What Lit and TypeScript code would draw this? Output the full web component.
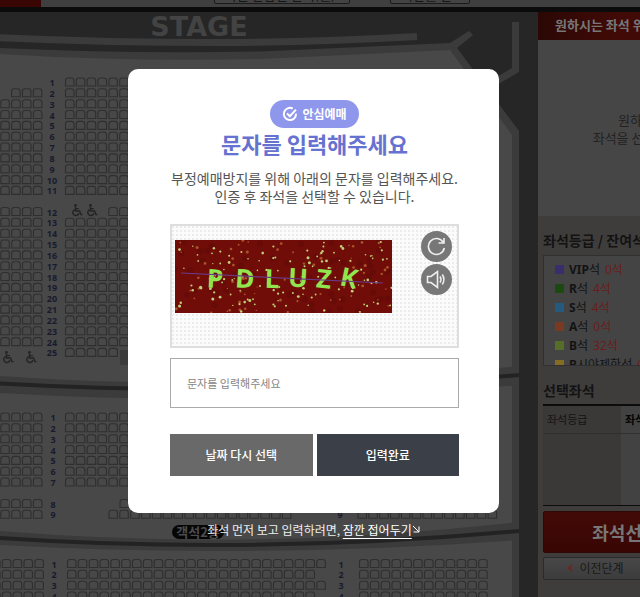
import { LitElement, html, svg, css } from "lit";
import { customElement } from "lit/decorators.js";

interface SeatRow {
  y: number;
  label: string;
  labels: number[];
  runs: [number, number][];
}

const PITCH = 10.84;
const LABEL_X = 52;
const LEFT = -10;

/** Rows of the seating plan: every run is [first seat x, number of seats]. */
function buildRows(): SeatRow[] {
  const rows: SeatRow[] = [];
  for (let i = 0; i < 11; i++) {
    const left: [number, number][] = i === 0 ? [] : i === 1 ? [[11.6, 3]] : [[LEFT, 5]];
    rows.push({ y: 66 + i * PITCH, label: `${i + 1}`, labels: [LABEL_X], runs: [...left, [65.5, 40]] });
  }
  for (let i = 0; i < 14; i++) {
    const right: [number, number] = i === 0 ? [108.8, 36] : i === 13 ? [65.5, 5] : [65.5, 40];
    const left: [number, number][] = i === 13 ? [] : [[LEFT, 5]];
    rows.push({ y: 195.5 + i * PITCH, label: `${i + 12}`, labels: [LABEL_X], runs: [...left, right] });
  }
  for (let i = 0; i < 7; i++) {
    rows.push({ y: 401 + i * PITCH, label: `${i + 1}`, labels: [53], runs: [[LEFT, 5], [65.5, 39]] });
  }
  rows.push({ y: 487.5, label: "8", labels: [53, 340], runs: [[LEFT, 5], [120, 15], [358, 13]] });
  rows.push({ y: 498.3, label: "9", labels: [53, 340], runs: [[LEFT, 5], [109, 17], [358, 13]] });
  for (let i = 0; i < 4; i++) {
    rows.push({
      y: 547.5 + i * PITCH,
      label: `${i + 1}`,
      labels: [54, 341],
      runs: [[-8.5, 5], [67.5, i % 2 === 0 ? 24 : 23], [359.5, 12]],
    });
  }
  return rows;
}

@customElement("seat-map")
export class SeatMap extends LitElement {
  static styles = css`
    :host { display: block; overflow: hidden; background: #262626; }
    svg { display: block; width: 100%; height: 100%; }
    .floor { fill: #484848; }
    .band { fill: #3b3b3b; }
    .rim { fill: none; stroke: #3b3b3b; stroke-width: 7; }
    .line { fill: none; stroke: #232323; stroke-width: 4; }
    .seat { fill: none; stroke: #2f2f2f; stroke-width: 1.1; }
    .num { font: 700 9px "Noto Sans", sans-serif; fill: #181b2e; text-anchor: middle; }
    .stage { font: 700 27px "DejaVu Sans", sans-serif; fill: #434343; text-anchor: middle; }
    .chair { fill: none; stroke: #232323; stroke-width: 1.4; }
    .head { fill: #232323; }
    .tag { fill: #060606; }
    .tag-text { font: 700 13px "Noto Sans CJK KR", sans-serif; fill: #4c4c4c; text-anchor: middle; }
  `;

  private seats(rows: SeatRow[]) {
    let d = "";
    for (const row of rows) {
      for (const [start, count] of row.runs) {
        for (let i = 0; i < count; i++) {
          const x = (start + i * PITCH).toFixed(1);
          d += `M${x} ${(row.y + 8).toFixed(1)}v-5.5q0 -2.5 2.5 -2.5h3.5q2.5 0 2.5 2.5v5.5z`;
        }
      }
    }
    return svg`<path class="seat" d=${d} />`;
  }

  private wheelchair(x: number, y: number) {
    return svg`<g transform="translate(${x} ${y})">
      <circle class="head" cx="3.5" cy="1.3" r="1.3" />
      <path class="chair" d="M3.5 2.5V7H7.5L9 10.6H10.5M3.5 4.6H6.8M2.6 5.6A3.1 3.1 0 1 0 6.9 9.2" />
    </g>`;
  }

  render() {
    const rows = buildRows();
    return html`<svg viewBox="0 0 538 585" preserveAspectRatio="xMinYMin slice" role="img" aria-label="STAGE">
      <text class="stage" x="199" y="24">STAGE</text>
      <path class="rim" d="M-4 25.5Q120 31 240 30.5Q330 29.5 417 24.5" />
      <path class="rim" d="M515.5 10V58L485 76" />
      <path class="band" d="M0 36Q130 42 260 39.5L450 31L469 19L473 23L457 36L519 119V585H0Z" />
      <path class="floor" d="M0 42Q130 50 260 47L450 38L512 123V585H0Z" />
      <path class="band" d="M0 364Q256 382 519 354V373Q256 396 0 381Z" />
      <path class="line" d="M0 371.5Q256 386 519 363" />
      <path class="band" d="M0 519Q256 540 519 510V528Q256 547 0 533Z" />
      <path class="line" d="M0 526Q256 543 519 519" />
      <rect class="band" x="120" y="338" width="20" height="15" />
      ${this.seats(rows)}
      ${rows.map((r) => r.labels.map((x) => svg`<text class="num" x=${x} y=${r.y + 8}>${r.label}</text>`))}
      ${this.wheelchair(72, 192)} ${this.wheelchair(87, 192)}
      ${this.wheelchair(3, 339)} ${this.wheelchair(26, 339)}
      <rect class="tag" x="172" y="513" width="52" height="14" rx="7" />
      <text class="tag-text" x="198" y="525">객석2층</text>
    </svg>`;
  }
}

const CODE: [string, number, number, number][] = [
  ["P", 40, 48, 3],
  ["D", 70, 48, 4],
  ["L", 97, 48, 2],
  ["U", 123, 47, 3],
  ["Z", 149, 48, 6],
  ["K", 174, 47, 12],
];

@customElement("code-picture")
export class CodePicture extends LitElement {
  static styles = css`
    :host { display: block; }
    svg { display: block; }
    .back { fill: #700d09; }
    .patch { fill: #660b08; }
    .dot { fill: #c3cf78; }
    .dim { fill: #a8552c; }
    .letter { font: 700 26px "Noto Sans", sans-serif; fill: #91e650; text-anchor: middle; }
    .strike { fill: none; stroke: #6b3b86; stroke-width: 1.2; }
  `;

  private specks() {
    let seed = 41;
    const next = () => (seed = (seed * 16807) % 2147483647) / 2147483647;
    return Array.from({ length: 250 }, (_, i) => {
      const kind = i < 60 ? "patch" : i < 130 ? "dim" : "dot";
      const r = kind === "patch" ? 3 : 0.7 + next() * 0.8;
      return svg`<circle class=${kind} cx=${(next() * 217).toFixed(1)} cy=${(next() * 73).toFixed(1)} r=${r.toFixed(1)} />`;
    });
  }

  render() {
    return html`<svg width="217" height="73" viewBox="0 0 217 73" role="img" aria-label="보안문자">
      <rect class="back" width="217" height="73" />
      ${this.specks()}
      ${CODE.map(([c, x, y, turn]) => svg`<text class="letter" x=${x} y=${y} transform="rotate(${turn} ${x} ${y - 9})">${c}</text>`)}
      <path class="strike" d="M6 33L208 43" />
    </svg>`;
  }
}

const GRADES = [
  { name: "VIP", left: "0석", tone: "violet" },
  { name: "R", left: "4석", tone: "green" },
  { name: "S", left: "4석", tone: "blue" },
  { name: "A", left: "0석", tone: "orange" },
  { name: "B", left: "32석", tone: "lime" },
  { name: "B", extra: "시야제한", left: "0석", tone: "yellow" },
];

@customElement("seat-panel")
export class SeatPanel extends LitElement {
  static styles = css`
    * { box-sizing: border-box; }
    :host {
      display: flex; flex-direction: column; background: #3f3d3c; color: #131313;
      font: 12px/18px "Noto Sans", "Noto Sans CJK KR", sans-serif;
    }
    h2, h3 { margin: 0; }
    h2 {
      background: linear-gradient(90deg, #2b0805, #420a06 40%); color: #777; padding-left: 17px;
      font: 700 13px/26px "Noto Sans CJK KR", sans-serif; height: 28px; white-space: nowrap;
    }
    .hint {
      margin: 0; height: 176px; display: grid; place-content: center; text-align: center;
      background: #464646; color: #222; font: 13px/18px "Noto Sans CJK KR", sans-serif; padding-top: 2px;
    }
    .body { padding: 15px 5px 0; }
    h3 { font: 700 14px/18px "Noto Sans CJK KR", sans-serif; }
    ul {
      list-style: none; margin: 6px 0 0; padding: 4px 11px 0; height: 111px; overflow: hidden;
      border: 1px solid #303030; background: #444;
    }
    li { display: flex; align-items: center; height: 19px; gap: 5px; white-space: nowrap; }
    .chip { width: 9px; height: 9px; }
    .violet { background: #392d6c; }
    .green { background: #1a4a0f; }
    .blue { background: #245a80; }
    .orange { background: #783b22; }
    .lime { background: #566e29; }
    .yellow { background: #846d20; }
    .grade { font-weight: 400; }
    .left { color: #6b1d1d; }
    .picked { margin-top: 15px; }
    table { width: 100%; border-collapse: collapse; margin-top: 5px; border-top: 2px solid #0c0c0c; border-bottom: 1px solid #0c0c0c; }
    th { height: 28px; border-bottom: 1px solid #303030; font: 11px/16px "Noto Sans CJK KR", sans-serif; text-align: left; padding: 0 4px; }
    th + th { font-weight: 700; color: #050505; }
    td { height: 72px; }
    th:first-child, td:first-child { width: 78px; background: #3b3938; }
    th:last-child, td:last-child { background: #424242; }
    button { font: 12px/18px "Noto Sans CJK KR", sans-serif; color: #191919; border-radius: 2px; padding: 0; }
    .go { width: 100%; height: 42px; margin-top: 5px; border: 1px solid #2e0806; background: linear-gradient(#420a07, #390604); color: #777; font-weight: 700; font-size: 18px; line-height: 24px; }
    .steps { display: grid; grid-template-columns: 106px 1fr; gap: 2px; margin-top: 4px; }
    .steps button { height: 23px; border: 1px solid #2a2a2a; background: linear-gradient(#484848, #3c3c3c); display: flex; align-items: center; justify-content: center; gap: 6px; }
    .arrow { width: 5px; height: 8px; fill: none; stroke: #7a1c17; stroke-width: 1.6; }
  `;

  render() {
    return html`
      <h2>원하시는 좌석 위치를 선택해주세요</h2>
      <p class="hint"><span>원하시는</span><span>좌석을 선택하세요</span></p>
      <div class="body">
        <h3>좌석등급 / 잔여석</h3>
        <ul>
          ${GRADES.map(
            (g) => html`<li>
              <span class="chip ${g.tone}"></span>
              <span class="grade"><b>${g.name}</b>${g.extra ?? ""}석</span>
              <span class="left">${g.left}</span>
            </li>`
          )}
        </ul>
        <h3 class="picked">선택좌석</h3>
        <table>
          <thead><tr><th>좌석등급</th><th>좌석번호</th></tr></thead>
          <tbody><tr><td></td><td></td></tr></tbody>
        </table>
        <button class="go" type="button">좌석선택완료</button>
        <div class="steps">
          <button type="button"><svg class="arrow" viewBox="0 0 5 8"><path d="M4 1L1 4L4 7" /></svg>이전단계</button>
          <button type="button">다시선택</button>
        </div>
      </div>
    `;
  }
}

@customElement("app-root")
export class AppRoot extends LitElement {
  static styles = css`
    * { box-sizing: border-box; }
    :host {
      display: block; position: relative; height: 100vh; min-height: 560px; overflow: hidden;
      background: #3f3d3c; font-family: "Noto Sans CJK KR", sans-serif;
    }
    .page { display: grid; grid-template-columns: 1fr 208px; grid-template-rows: 12px 1fr; min-width: 746px; height: 100%; }
    header {
      grid-column: 1 / -1; display: flex; align-items: flex-end; gap: 40px; overflow: hidden;
      background: #3f3f3f; border-bottom: 5px solid #0b0b0b;
    }
    .brand { width: 41px; height: 7px; background: #3a0603; margin-right: 133px; }
    header select {
      appearance: none; height: 19px; margin-bottom: 3px; padding: 0 10px; flex: none;
      border: 1px solid #1a1a1a; border-radius: 2px; background: #434343; color: #151515;
      font: 13px/17px "Noto Sans CJK KR", sans-serif;
    }
    .play { width: 136px; }
    .date { width: 80px; }
    .overlay {
      position: absolute; inset: 0; padding: 69px 13px 0 0;
      display: flex; flex-direction: column; align-items: center;
    }
    .dialog {
      width: 371px; max-width: 100%; padding: 31px 40px 37px 42px; border-radius: 10px; background: #fff;
      display: flex; flex-direction: column;
    }
    .badge {
      align-self: center; display: flex; align-items: center; gap: 4px; height: 28px; padding: 0 12px;
      border-radius: 14px; background: #8f97ec; color: #fff; font-weight: 700; font-size: 12px; line-height: 18px;
    }
    .badge svg { width: 16px; height: 16px; fill: none; stroke: #fff; stroke-width: 2; }
    h1 { margin: 0; text-align: center; font-size: 22px; line-height: 30px; font-weight: 700; color: #6672cf; }
    .lead { margin: 11px 0 0; text-align: center; font-size: 14px; line-height: 18px; color: #555; white-space: nowrap; }
    .challenge {
      margin-top: 19px; height: 124px; padding: 5px 5px 0 4px; display: flex; justify-content: space-between;
      border: 2px solid #dedede;
      background: radial-gradient(circle at 1px 1px, #ececec 1px, transparent 1px) 0 0 / 4px 4px, #fbfbfb;
    }
    code-picture { margin-top: 9px; margin-left: -1px; }
    .tools { display: flex; flex-direction: column; gap: 2px; }
    .tools button { width: 31px; height: 31px; padding: 0; border: 0; border-radius: 50%; background: #777; display: grid; place-items: center; }
    .tools svg { width: 23px; height: 23px; fill: none; stroke: #eee; stroke-width: 1.6; }
    input {
      margin-top: 10px; width: 100%; height: 50px; padding: 0 16px; border: 1px solid #aaa; border-radius: 0;
      background: #fff; font: 11px/18px "Noto Sans CJK KR", sans-serif; color: #333;
    }
    input::placeholder { color: #858585; opacity: 1; }
    .actions { display: grid; grid-template-columns: 1fr 1fr; gap: 4px; margin-top: 26px; }
    .actions button { height: 42px; border: 0; color: #fff; font: 500 12px/18px "Noto Sans CJK KR", sans-serif; }
    .again { background: #696969; }
    .done { background: #3a3f48; }
    .fold { margin: 8px 0 0; font-size: 12px; line-height: 18px; color: #eee; white-space: nowrap; }
    .fold a { color: #fff; text-underline-offset: 3px; }
    .fold svg { width: 8px; height: 8px; fill: none; stroke: #fff; stroke-width: 1; vertical-align: 2px; }
  `;

  render() {
    return html`
      <div class="page">
        <header>
          <span class="brand"></span>
          <select class="play" aria-label="다른 관람일 선택"><option>다른 관람일 선택(월)</option></select>
          <select class="date" aria-label="시간 선택"><option>시간을 선택</option></select>
        </header>
        <seat-map></seat-map>
        <seat-panel></seat-panel>
      </div>
      <div class="overlay">
        <form class="dialog" role="dialog" aria-labelledby="title" @submit=${(e: Event) => e.preventDefault()}>
          <span class="badge">
            <svg viewBox="0 0 16 16"><path d="M10.8 2.6A6.1 6.1 0 1 0 14 7.6M5 7.4L7.8 10.2L14 3.6" /></svg>안심예매
          </span>
          <h1 id="title">문자를 입력해주세요</h1>
          <p class="lead">부정예매방지를 위해 아래의 문자를 입력해주세요.<br />인증 후 좌석을 선택할 수 있습니다.</p>
          <div class="challenge">
            <code-picture></code-picture>
            <div class="tools">
              <button type="button" aria-label="새로고침">
                <svg viewBox="0 0 23 23"><path d="M18.2 7.2A8 8 0 1 0 19.3 13M19 3V8H13.5" /></svg>
              </button>
              <button type="button" aria-label="음성듣기">
                <svg viewBox="0 0 23 23"><path d="M2.5 8.5H6L12.5 3.5V19.5L6 14.5H2.5ZM15 8.5Q17 11.5 15 14.5M17.3 6.5Q20.5 11.5 17.3 16.5" /></svg>
              </button>
            </div>
          </div>
          <input type="text" aria-label="문자를 입력해주세요" placeholder="문자를 입력해주세요" />
          <div class="actions">
            <button class="again" type="button">날짜 다시 선택</button>
            <button class="done" type="submit">입력완료</button>
          </div>
        </form>
        <p class="fold">좌석 먼저 보고 입력하려면, <a href="#">잠깐 접어두기<svg viewBox="0 0 8 8"><path d="M1 1L7 7M7 1.5V7H1.5" /></svg></a></p>
      </div>
    `;
  }
}
